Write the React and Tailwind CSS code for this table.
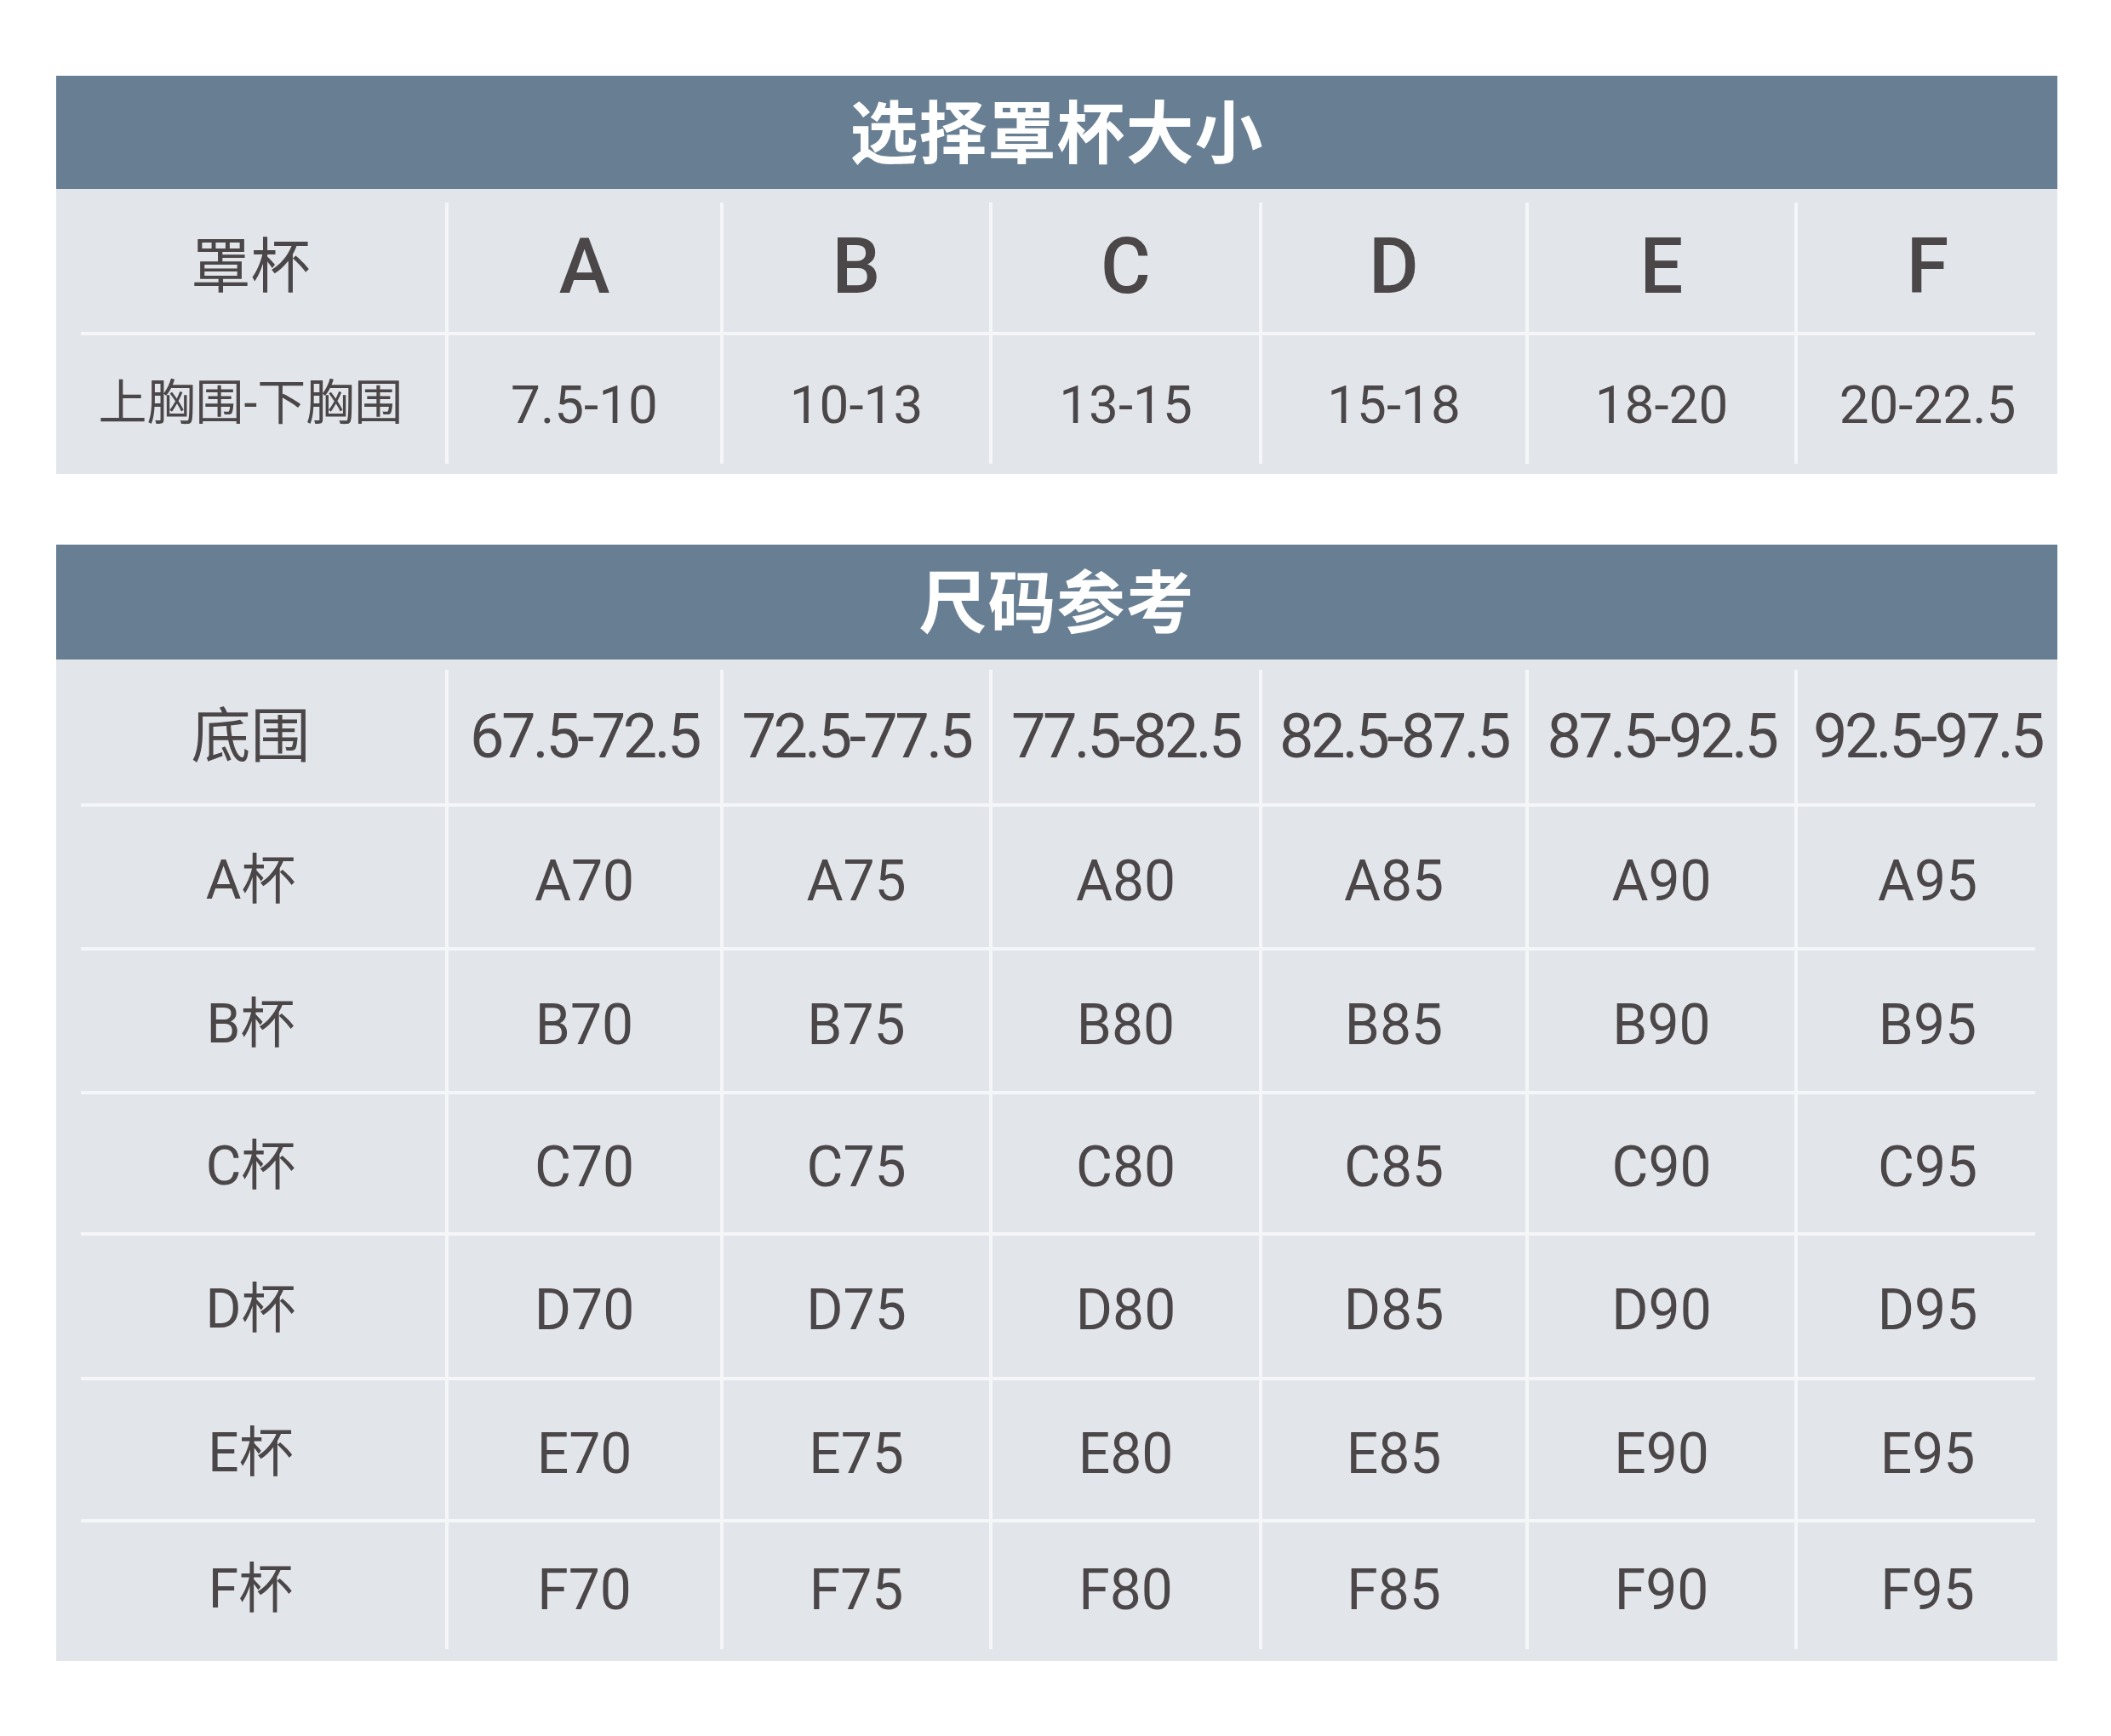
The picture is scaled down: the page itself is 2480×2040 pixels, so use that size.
import React from 'react';

// 罩杯尺码表：两个表格，标题栏 + 浅灰内容区，白色细线分隔

const COLS = 'grid grid-cols-[457px_323px_316px_317px_313px_316px_1fr]';
const LINE = 'bg-[#f4f6f8]';

const cupRows = [
  {
    h: 'h-[152px]',
    head: { text: '罩杯', cls: 'text-[70px]' },
    cells: ['A', 'B', 'C', 'D', 'E', 'F'],
    cellCls: 'text-[90px] font-medium',
  },
  {
    h: 'h-[151px]',
    head: { text: '上胸围-下胸围', cls: 'text-[57px] pt-[8px]' },
    cells: ['7.5-10', '10-13', '13-15', '15-18', '18-20', '20-22.5'],
    cellCls: 'text-[62px] pt-[12px]',
  },
];

const sizes = ['70', '75', '80', '85', '90', '95'];
const cupLetters = ['A', 'B', 'C', 'D', 'E', 'F'];
const midHeights = ['h-[165px]', 'h-[165px]', 'h-[162px]', 'h-[166px]', 'h-[163px]', 'h-[149px]'];

const sizeRows = [
  {
    h: 'h-[157px]',
    head: { text: '底围', cls: 'text-[70px]' },
    cells: ['67.5-72.5', '72.5-77.5', '77.5-82.5', '82.5-87.5', '87.5-92.5', '92.5-97.5'],
    cellCls: 'text-[72px] tracking-[-3.5px]',
  },
  ...cupLetters.map((c, i) => ({
    h: midHeights[i],
    head: { text: `${c}杯`, cls: 'text-[64px] pt-[8px]' },
    cells: sizes.map((s) => `${c}${s}`),
    cellCls: 'text-[66px] pt-[10px]',
  })),
];

const TableBlock = ({ title, headH, rows, padCls }) => (
  <div className="w-[2351px]">
    <div
      className={`${headH} bg-[#687f93] flex items-center justify-center pt-[5px] text-white font-bold text-[80px] leading-none tracking-[1px]`}
    >
      {title}
    </div>
    <div className={`bg-[#e2e6eb] ${padCls}`}>
      {rows.map((row, i) => (
        <React.Fragment key={i}>
          {i > 0 && <div className={`ml-[29px] mr-[26px] h-[4px] ${LINE}`} />}
          <div className={`${COLS} ${row.h}`}>
            <div className={`flex items-center justify-center leading-none ${row.head.cls}`}>
              {row.head.text}
            </div>
            {row.cells.map((t, j) => (
              <div
                key={j}
                className={`flex items-center justify-center leading-none border-l-4 border-[#f4f6f8] ${row.cellCls}`}
              >
                {t}
              </div>
            ))}
          </div>
        </React.Fragment>
      ))}
    </div>
  </div>
);

export default function App() {
  return (
    <div className="w-[2480px] min-h-[2040px] bg-white pt-[89px] pl-[66px] text-[#4b4647] font-['Roboto','Noto_Sans_CJK_SC',sans-serif]">
      <div className="flex flex-col gap-[83px]">
        <TableBlock title="选择罩杯大小" headH="h-[133px]" rows={cupRows} padCls="pt-[16px] pb-[12px]" />
        <TableBlock title="尺码参考" headH="h-[135px]" rows={sizeRows} padCls="pt-[12px] pb-[14px]" />
      </div>
    </div>
  );
}
